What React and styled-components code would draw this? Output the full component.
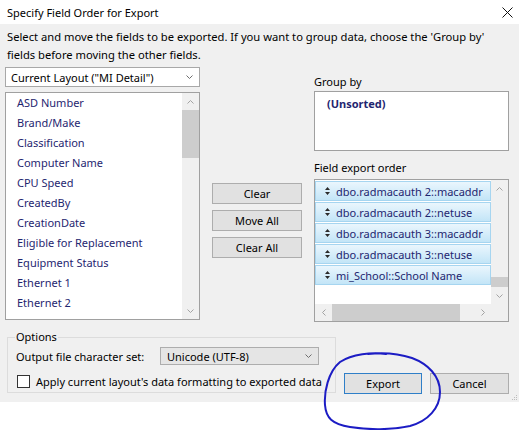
import React from 'react'
import styled, { createGlobalStyle } from 'styled-components'

const GlobalStyle = createGlobalStyle`
    html, body {
        margin: 0;
        padding: 0;
        background: #fff;
    }
    body {
        font-family: "Noto Sans", "Liberation Sans", sans-serif;
        font-size: 11px;
        color: #000;
    }
`

const Page = styled.div`
    position: relative;
    width: 519px;
    height: 430px;
    overflow: hidden;
    background: #fff;
`

const TitleBar = styled.div`
    height: 24px;
    display: flex;
    align-items: center;
    justify-content: space-between;
    padding: 0 6px 0 7px;
    background: #fff;
    font-size: 11px;
`

const Body = styled.div`
    background: #f0f0f0;
    padding: 4px 10px 9px 5px;
`

const Intro = styled.p`
    margin: 0 0 3px 2px;
    line-height: 18px;
    font-size: 11.2px;
`

const MainArea = styled.div`
    display: grid;
    grid-template-columns: 195px 90px 195px;
    column-gap: 12px;
    height: 255px;
`

const Column = styled.div`
    display: flex;
    flex-direction: column;
    gap: ${p => p.gap || 0}px;
    padding-top: ${p => p.top || 0}px;
`

const Combo = styled.div`
    height: ${p => p.h || 20}px;
    width: ${p => p.w ? p.w + 'px' : 'auto'};
    box-sizing: border-box;
    border: 1px solid ${p => p.grey ? '#adadad' : '#a8a8a8'};
    background: ${p => p.grey ? '#e5e5e5' : '#fff'};
    display: flex;
    align-items: center;
    justify-content: space-between;
    padding: 0 6px 0 ${p => p.pl || 5}px;
`

const ListBox = styled.div`
    height: ${p => p.h}px;
    box-sizing: border-box;
    border: 1px solid #a0a0a0;
    background: #fff;
    display: flex;
    overflow: hidden;
`

const ListItems = styled.div`
    flex: 1;
    overflow: hidden;
`

const ListItem = styled.div`
    height: 20px;
    line-height: 20px;
    padding-left: 11px;
    color: #1f2670;
    white-space: nowrap;
`

const VScroll = styled.div`
    width: 17px;
    background: #f0f0f0;
    display: flex;
    flex-direction: column;
`

const ScrollArrow = styled.div`
    width: 17px;
    height: 17px;
    flex-shrink: 0;
    display: flex;
    align-items: center;
    justify-content: center;
`

const ScrollTrack = styled.div`
    flex: 1;
    display: flex;
    flex-direction: ${p => p.horizontal ? 'row' : 'column'};
    justify-content: ${p => p.end ? 'flex-end' : 'flex-start'};
`

const Thumb = styled.div`
    background: #cdcdcd;
    ${p => p.horizontal ? `width: ${p.size}px; height: 100%;` : `height: ${p.size}px; width: 100%;`}
`

const Button = styled.button`
    width: ${p => p.w || 90}px;
    height: 21px;
    padding: 0;
    background: #e1e1e1;
    border: 1px solid ${p => p.primary ? '#2f7fc8' : '#adadad'};
    font-family: inherit;
    font-size: 11px;
    font-weight: 400;
    color: #000;
`

const Label = styled.div`
    line-height: 16px;
    margin-top: ${p => p.mt || 0}px;
`

const GroupBox = styled.div`
    height: 60px;
    margin-top: 1px;
    box-sizing: border-box;
    border: 1px solid #a0a0a0;
    background: #fff;
    padding: 4px 0 0 12px;
    font-weight: bold;
    color: #1f2670;
    line-height: 16px;
`

const OrderBox = styled.div`
    height: 143px;
    margin-top: 3px;
    box-sizing: border-box;
    border: 1px solid #a0a0a0;
    background: #fff;
    display: grid;
    grid-template-columns: 1fr 17px;
    grid-template-rows: 1fr 17px;
`

const OrderRows = styled.div`
    padding-top: 1px;
    overflow: hidden;
    display: flex;
    flex-direction: column;
    gap: 1px;
`

const OrderRow = styled.div`
    height: 20px;
    box-sizing: border-box;
    border: 1px solid #a6d5f0;
    background: linear-gradient(#eaf6fd, #c3e5f7);
    display: flex;
    align-items: center;
    gap: 6px;
    padding-left: 9px;
    color: #1f2670;
    white-space: nowrap;
    overflow: hidden;
`

const HScroll = styled.div`
    background: #f0f0f0;
    display: flex;
`

const Corner = styled.div`
    background: #f0f0f0;
`

const BottomRow = styled.div`
    display: flex;
    align-items: flex-end;
    gap: 8px;
    margin-top: 7px;
    padding-left: 2px;
`

const Options = styled.fieldset`
    width: 329px;
    box-sizing: border-box;
    margin: 0;
    padding: 0 8px 3px 8px;
    border: 1px solid #dcdcdc;
    min-width: 0;

    legend {
        padding: 0 1px;
        line-height: 16px;
        margin-left: -1px;
    }
`

const OptionRow = styled.div`
    display: flex;
    align-items: center;
    height: ${p => p.h}px;
    margin-top: ${p => p.mt}px;
    gap: ${p => p.gap || 0}px;
    white-space: nowrap;
`

const CheckBox = styled.div`
    width: 13px;
    height: 13px;
    box-sizing: border-box;
    border: 1px solid #333;
    background: #fff;
    flex-shrink: 0;
    margin-left: 1px;
`

const Buttons = styled.div`
    display: flex;
    gap: 8px;
    margin-bottom: -1px;
`

const Grip = styled.svg`
    position: absolute;
    right: 1px;
    bottom: 29px;
`

const Scribble = styled.svg`
    position: absolute;
    left: 0;
    top: 0;
    pointer-events: none;
`

const Chevron = ({ dir = 'down', color = '#6d6d6d' }) => {
    const paths = {
        down: 'M0.5 0.5 L3.5 3.5 L6.5 0.5',
        up: 'M0.5 3.5 L3.5 0.5 L6.5 3.5',
        left: 'M3.5 0.5 L0.5 3.5 L3.5 6.5',
        right: 'M0.5 0.5 L3.5 3.5 L0.5 6.5',
    }
    const horiz = dir === 'left' || dir === 'right'
    return (
        <svg width={horiz ? 4 : 7} height={horiz ? 7 : 4} viewBox={horiz ? '0 0 4 7' : '0 0 7 4'}>
            <path d={paths[dir]} fill="none" stroke={color} strokeWidth="1" />
        </svg>
    )
}

const SortIcon = () => (
    <svg width="5" height="8" viewBox="0 0 5 8">
        <path d="M0 3 L2.5 0 L5 3 Z M0 5 L5 5 L2.5 8 Z" fill="#2b2b2b" />
    </svg>
)

const campos = [
    'ASD Number',
    'Brand/Make',
    'Classification',
    'Computer Name',
    'CPU Speed',
    'CreatedBy',
    'CreationDate',
    'Eligible for Replacement',
    'Equipment Status',
    'Ethernet 1',
    'Ethernet 2',
    'Ethernet 3',
]

const ordem = [
    'dbo.radmacauth 2::macaddr',
    'dbo.radmacauth 2::netuse',
    'dbo.radmacauth 3::macaddr',
    'dbo.radmacauth 3::netuse',
    'mi_School::School Name',
]

export default class App extends React.Component {

    state = {
        campos: campos,
        ordem: ordem,
        formatar: false,
    }

    render() {
        const listaCampos = this.state.campos.map((campo) => (
            <ListItem key={campo}>{campo}</ListItem>
        ))

        const listaOrdem = this.state.ordem.map((campo) => (
            <OrderRow key={campo}>
                <SortIcon />
                <span>{campo}</span>
            </OrderRow>
        ))

        return (
            <Page>
                <GlobalStyle />
                <TitleBar>
                    <span>Specify Field Order for Export</span>
                    <svg width="11" height="11" viewBox="0 0 11 11">
                        <path d="M0.5 0.5 L10.5 10.5 M10.5 0.5 L0.5 10.5" stroke="#111" strokeWidth="1" />
                    </svg>
                </TitleBar>
                <Body>
                    <Intro>
                        Select and move the fields to be exported. If you want to group data, choose the 'Group by'
                        <br />
                        fields before moving the other fields.
                    </Intro>
                    <MainArea>
                        <Column gap={5}>
                            <Combo>
                                <span>Current Layout ("MI Detail")</span>
                                <Chevron />
                            </Combo>
                            <ListBox h={228}>
                                <ListItems>{listaCampos}</ListItems>
                                <VScroll>
                                    <ScrollArrow><Chevron dir="up" color="#a3a3a3" /></ScrollArrow>
                                    <ScrollTrack>
                                        <Thumb size={48} />
                                    </ScrollTrack>
                                    <ScrollArrow><Chevron color="#a3a3a3" /></ScrollArrow>
                                </VScroll>
                            </ListBox>
                        </Column>
                        <Column gap={6} top={116}>
                            <Button>Clear</Button>
                            <Button>Move All</Button>
                            <Button>Clear All</Button>
                        </Column>
                        <Column>
                            <Label mt={7}>Group by</Label>
                            <GroupBox>(Unsorted)</GroupBox>
                            <Label mt={9}>Field export order</Label>
                            <OrderBox>
                                <OrderRows>{listaOrdem}</OrderRows>
                                <VScroll>
                                    <ScrollArrow><Chevron dir="up" color="#a3a3a3" /></ScrollArrow>
                                    <ScrollTrack end>
                                        <Thumb size={10} />
                                    </ScrollTrack>
                                    <ScrollArrow><Chevron color="#a3a3a3" /></ScrollArrow>
                                </VScroll>
                                <HScroll>
                                    <ScrollArrow><Chevron dir="left" color="#a3a3a3" /></ScrollArrow>
                                    <ScrollTrack horizontal>
                                        <Thumb horizontal size={128} />
                                    </ScrollTrack>
                                    <ScrollArrow><Chevron dir="right" color="#a3a3a3" /></ScrollArrow>
                                </HScroll>
                                <Corner />
                            </OrderBox>
                        </Column>
                    </MainArea>
                    <BottomRow>
                        <Options>
                            <legend>Options</legend>
                            <OptionRow h={18} mt={2}>
                                <span style={{ width: 144 }}>Output file character set:</span>
                                <Combo grey h={18} w={159} pl={6}>
                                    <span>Unicode (UTF-8)</span>
                                    <Chevron />
                                </Combo>
                            </OptionRow>
                            <OptionRow h={16} mt={8} gap={6}>
                                <CheckBox />
                                <span>Apply current layout's data formatting to exported data</span>
                            </OptionRow>
                        </Options>
                        <Buttons>
                            <Button primary w={78}>Export</Button>
                            <Button w={79}>Cancel</Button>
                        </Buttons>
                    </BottomRow>
                </Body>
                <Grip width="6" height="6" viewBox="0 0 6 6">
                    <rect x="4" y="0" width="1" height="1" fill="#bdbdbd" />
                    <rect x="2" y="2" width="1" height="1" fill="#bdbdbd" />
                    <rect x="4" y="2" width="1" height="1" fill="#bdbdbd" />
                    <rect x="0" y="4" width="1" height="1" fill="#bdbdbd" />
                    <rect x="2" y="4" width="1" height="1" fill="#bdbdbd" />
                    <rect x="4" y="4" width="1" height="1" fill="#bdbdbd" />
                </Grip>
                <Scribble width="519" height="430" viewBox="0 0 519 430">
                    <path
                        d="M386 354 C372 352 352 354 340 362 C328 372 324 392 325 405 C326 418 332 424 350 427 C368 430 392 430 410 426 C428 421 440 408 440 392 C440 376 428 364 412 358 C400 354 385 352 368 354"
                        fill="none"
                        stroke="#1c1cc4"
                        strokeWidth="2"
                        strokeLinecap="round"
                    />
                </Scribble>
            </Page>
        )
    }
}
